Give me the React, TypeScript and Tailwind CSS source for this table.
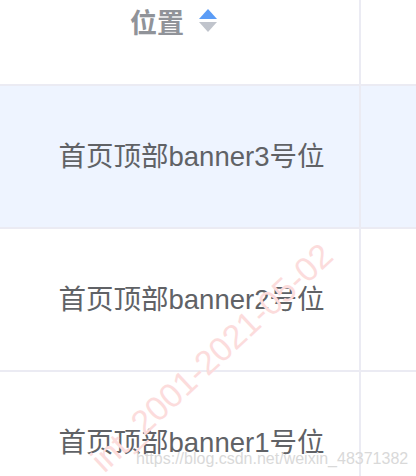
const rows = ['首页顶部banner3号位', '首页顶部banner2号位', '首页顶部banner1号位']

const font = { fontFamily: '"Liberation Sans", "Noto Sans CJK SC", sans-serif' }

function SortIcon() {
  return (
    <svg width="18" height="24" viewBox="0 0 18 24" className="ml-[15px]">
      <path d="M9 0 L18 10 L0 10 Z" fill="#5b9cf6" />
      <path d="M0 13 L18 13 L9 23 Z" fill="#c0c4cc" />
    </svg>
  )
}

export default function App() {
  return (
    <div className="relative w-[416px] h-[476px] overflow-hidden bg-white" style={font}>
      <div className="grid grid-cols-[361px_1fr]">
        {/* header */}
        <div className="h-[86px] border-b-2 border-r-2 border-[#ebebf3] flex items-start pt-[9px] pl-[130px]">
          <span className="text-[27px] leading-[30px] font-bold text-[#909399]">位置</span>
          <SortIcon />
        </div>
        <div className="h-[86px] border-b-2 border-[#ebebf3]" />

        {rows.map((r, i) => (
          <div key={r} className="contents">
            <div
              className={`h-[143px] border-b-2 border-r-2 border-[#ebebf3] flex items-center justify-center pl-[24px] ${i === 0 ? 'bg-[#eef4ff]' : ''}`}
            >
              <span className="text-[27.5px] text-[#606266] whitespace-nowrap">{r}</span>
            </div>
            <div className={`h-[143px] border-b-2 border-[#ebebf3] ${i === 0 ? 'bg-[#eef4ff]' : ''}`} />
          </div>
        ))}
      </div>

      {/* watermarks */}
      <div className="absolute left-[96px] top-[448px] -rotate-[43deg] origin-left text-[34px] leading-none text-[#fcdcdc] whitespace-nowrap pointer-events-none">
        int_2001-2021-05-02
      </div>
      <div className="absolute left-[136px] top-[447px] text-[16px] text-[#d9d9d9] whitespace-nowrap pointer-events-none">
        https://blog.csdn.net/weixin_48371382
      </div>
    </div>
  )
}
